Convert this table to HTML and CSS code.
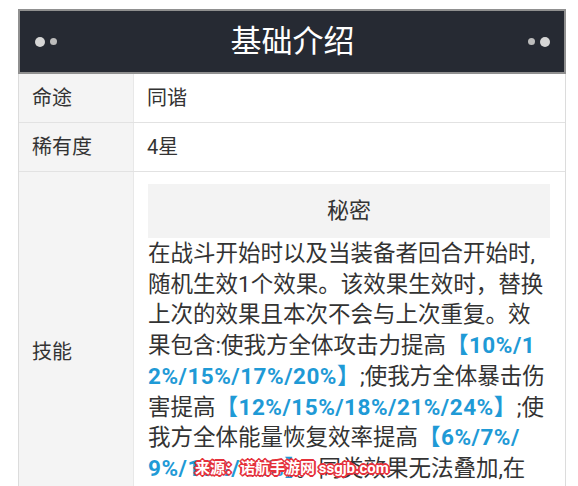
FILE: index.html
```html
<!DOCTYPE html>
<html>
<head>
    <title>基础介绍</title>
    <meta charset="UTF-8">
    <meta name="viewport" content="width=device-width, initial-scale=1.0">
    <link rel="stylesheet" href="styles.css">
</head>
<body>
    <div class="info-card">
        <div class="card-head">
            <span class="dots"><i class="dot big"></i><i class="dot small"></i></span>
            <h2>基础介绍</h2>
            <span class="dots"><i class="dot small"></i><i class="dot big"></i></span>
        </div>
        <table class="info-table">
            <tr>
                <th>命途</th>
                <td>同谐</td>
            </tr>
            <tr>
                <th>稀有度</th>
                <td>4星</td>
            </tr>
            <tr>
                <th>技能</th>
                <td class="skill">
                    <div class="skill-name">秘密</div>
                    <p class="skill-desc">在战斗开始时以及当装备者回合开始时,随机生效1个效果。该效果生效时，替换上次的效果且本次不会与上次重复。效果包含:使我方全体攻击力提高<span class="num">【10%/12%/15%/17%/20%】</span>;使我方全体暴击伤害提高<span class="num">【12%/15%/18%/21%/24%】</span>;使我方全体能量恢复效率提高<span class="num">【6%/7%/9%/10%/12%】</span>。同类效果无法叠加,在场上时仅生效最高的效果。</p>
                </td>
            </tr>
        </table>
    </div>
    <div class="watermark">来源：诺航手游网 ssgjb.com</div>
</body>
</html>
```

FILE: styles.css
```css
body {
    margin: 0;
    background: #fff;
    font-family: Roboto, "Noto Sans CJK SC", sans-serif;
    color: #333;
    overflow: hidden;
}

.info-card {
    width: 548px;
    margin: 9px 0 0 18px;
    border-left: 1px solid #dcdcdc;
    border-right: 1px solid #dcdcdc;
    box-sizing: border-box;
}

.card-head {
    height: 65px;
    margin: 0 -1px;
    background: #262a33;
    border: 2px solid #909090;
    box-sizing: border-box;
    display: flex;
    align-items: center;
    justify-content: space-between;
    padding: 0 14px 0 15px;
}

.card-head h2 {
    margin: 0;
    color: #fff;
    font-size: 31px;
    font-weight: 400;
    line-height: 1;
}

.dots {
    display: flex;
    align-items: center;
    gap: 5px;
}

.dot {
    display: block;
    border-radius: 50%;
    background: #d6d6d6;
}

.dot.big {
    width: 10px;
    height: 10px;
}

.dot.small {
    width: 7px;
    height: 7px;
    background: #bcbcbc;
}

.info-table {
    width: 100%;
    border-collapse: collapse;
}

.info-table th,
.info-table td {
    border-bottom: 1px solid #e2e2e2;
    font-size: 20px;
    line-height: 24px;
    padding: 12px 12px 12px 13px;
    text-align: left;
}

.info-table th {
    width: 89px;
    background: #f4f4f4;
    font-weight: 400;
    color: #333;
    border-right: 1px solid #e8e8e8;
}

.info-table td.skill {
    padding: 12px 15px 18px 14px;
}

.skill-name {
    background: #f3f3f3;
    height: 54px;
    display: flex;
    align-items: center;
    justify-content: center;
    font-size: 22px;
    font-weight: 400;
}

.skill-desc {
    margin: 0;
    padding-right: 4px;
    font-size: 22.5px;
    line-height: 30.7px;
    word-break: break-all;
}

.num {
    color: #1f9ad6;
    font-weight: 700;
    letter-spacing: 0.5px;
}

.watermark {
    position: absolute;
    left: 195px;
    top: 457px;
    font-size: 15px;
    font-weight: 700;
    line-height: 22px;
    color: #fff;
    text-shadow: 1px 0 #e5303a, -1px 0 #e5303a, 0 1px #e5303a, 0 -1px #e5303a,
        2px 0 #e5303a, -2px 0 #e5303a, 0 2px #e5303a, 0 -2px #e5303a,
        1px 1px #e5303a, -1px -1px #e5303a, 1px -1px #e5303a, -1px 1px #e5303a;
}
```
